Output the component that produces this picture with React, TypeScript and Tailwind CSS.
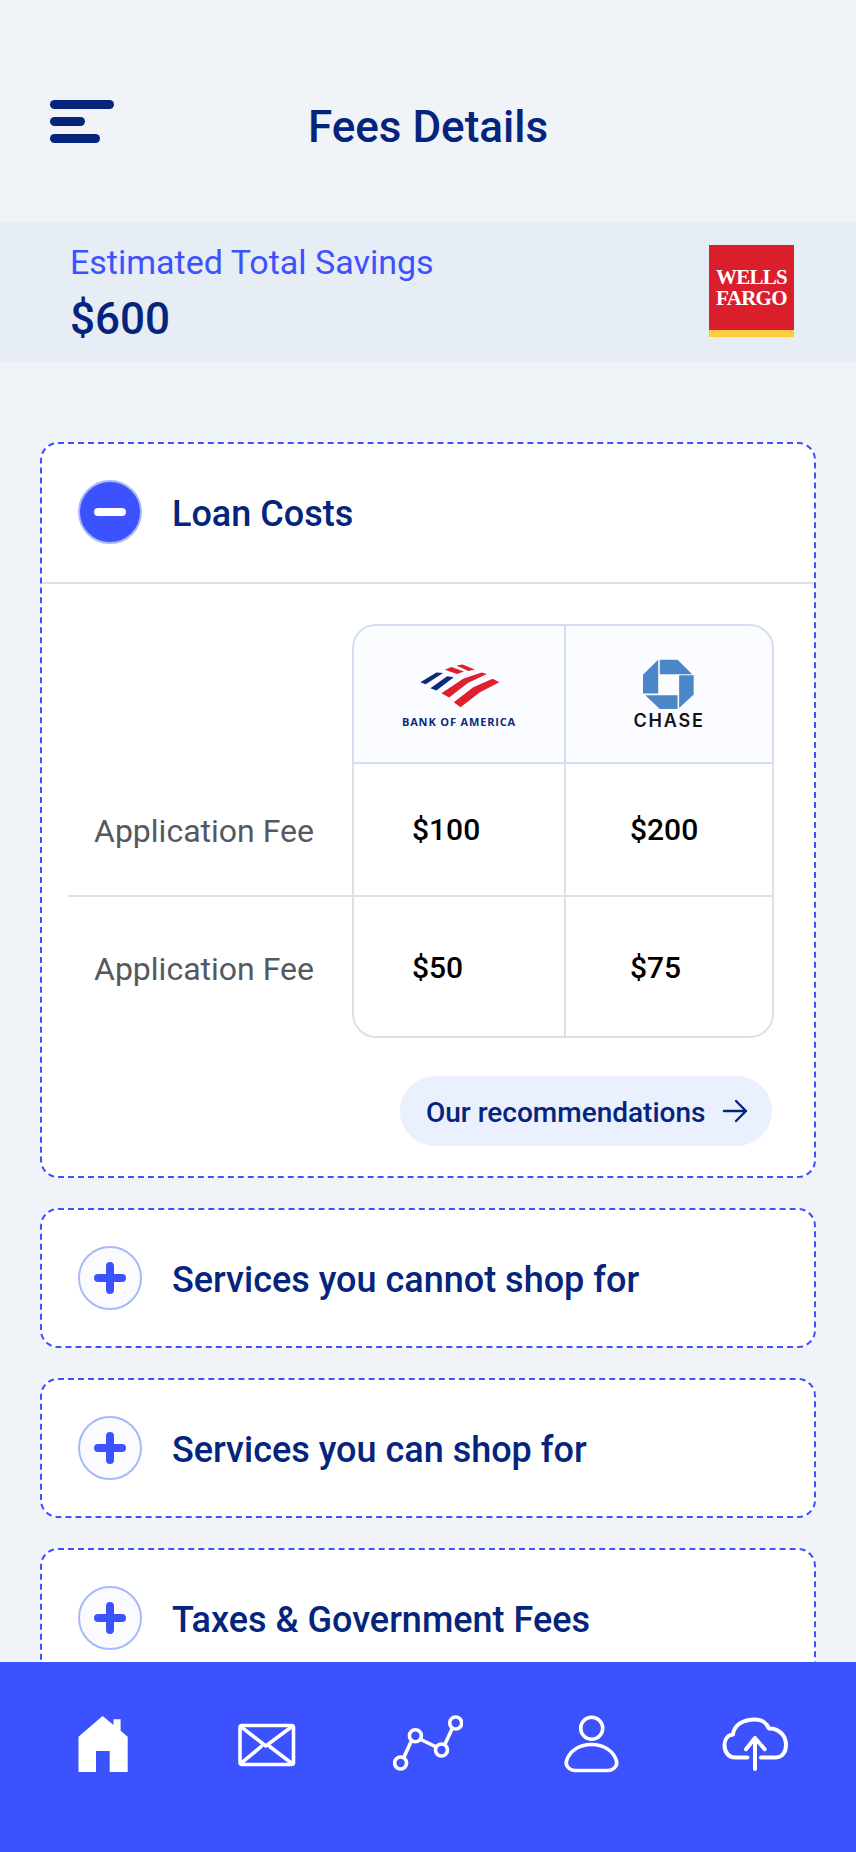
import React from "react";

const NAVY = "text-[#05247c]";

function Plus() {
  return (
    <div className="w-16 h-16 shrink-0 rounded-full border-2 border-[#a6baf9] bg-[#fafbff] flex items-center justify-center">
      <svg width="32" height="32" viewBox="0 0 32 32">
        <path d="M4 16H28M16 4V28" stroke="#3d52ff" strokeWidth="8" strokeLinecap="round" />
      </svg>
    </div>
  );
}

function Minus() {
  return (
    <div className="w-16 h-16 shrink-0 rounded-full border-2 border-[#a6baf9] bg-[#3d52ff] flex items-center justify-center">
      <div className="w-8 h-2 rounded-full bg-white" />
    </div>
  );
}

function CollapsedCard({ title }: { title: string }) {
  return (
    <section className="h-[140px] shrink-0 rounded-[18px] border-2 border-dashed border-[#3d52ff] bg-white flex items-center pl-9 gap-[30px]">
      <Plus />
      <h2 className={`pt-[4px] text-[36px] leading-none font-medium ${NAVY}`}>{title}</h2>
    </section>
  );
}

function BofaLogo() {
  return (
    <div className="flex flex-col items-center">
      <svg width="82" height="47" viewBox="235 150 245 140">
        <g fill="#0a2a7c">
          <path d="M242 210L290 181L310 183L258 216Z" />
          <path d="M272 228L322 192L342 195L290 235Z" />
        </g>
        <g fill="#df1f2d">
          <path d="M315 173L335 165L372 178L352 186Z" />
          <path d="M350 160L368 157L405 172L385 177Z" />
          <path d="M305 243L370 200L425 181L441 186L385 212L328 256Z" />
          <path d="M342 270L400 225L458 200L478 210L420 240L362 285Z" />
        </g>
      </svg>
      <div className="mt-[7px] text-[11px] leading-[11px] font-bold tracking-[0.85px] whitespace-nowrap text-[#0a2a7c] font-['Open_Sans',sans-serif]">
        BANK OF AMERICA
      </div>
    </div>
  );
}

function ChaseLogo() {
  return (
    <div className="flex flex-col items-center">
      <svg width="51" height="51" viewBox="908 150 158 154" className="-mt-[1px]">
        <g fill="#4a86c8">
          <path d="M960 150H1015L1060 195H960Z" />
          <path d="M1020 198H1065V258L1020 300Z" />
          <path d="M915 260H1015V303H960Z" />
          <path d="M908 197L955 150V255H908Z" />
        </g>
      </svg>
      <div className="mt-[3px] text-[18px] leading-[15px] font-semibold tracking-[1.8px] text-[#111318] font-['Inter',sans-serif]">
        CHASE
      </div>
    </div>
  );
}

function LoanCard() {
  const hd = "border-[#d4ddf3] bg-[#fbfcff] flex items-center justify-center";
  const label = "text-[32px] leading-none text-[#55585f] pl-[26px] pt-[3px] flex items-center";
  const val = "text-[30px] leading-none font-medium text-black flex items-center";
  return (
    <section className="h-[736px] shrink-0 rounded-[18px] border-2 border-dashed border-[#3d52ff] bg-white flex flex-col">
      <div className="h-[140px] shrink-0 border-b-2 border-[#e0e0e0] flex items-center pl-9 pb-[2px] gap-[30px]">
        <Minus />
        <h2 className={`pt-[4px] text-[36px] leading-none font-medium ${NAVY}`}>Loan Costs</h2>
      </div>
      <div className="grid grid-cols-[284px_214px_208px] grid-rows-[140px_133px_141px] ml-[26px] mt-10">
        <div />
        <div className={`${hd} border-t-2 border-l-2 border-r-2 border-b-2 rounded-tl-[24px]`}>
          <BofaLogo />
        </div>
        <div className={`${hd} border-t-2 border-r-2 border-b-2 rounded-tr-[24px]`}>
          <ChaseLogo />
        </div>

        <div className={`${label} border-b-2 border-[#e0e0e0]`}>Application Fee</div>
        <div className={`${val} pl-[58px] border-l-2 border-r-2 border-b-2 border-[#e0e0e0]`}>$100</div>
        <div className={`${val} pl-[64px] border-r-2 border-b-2 border-[#e0e0e0]`}>$200</div>

        <div className={label}>Application Fee</div>
        <div className={`${val} pl-[58px] pt-[2px] border-l-2 border-r-2 border-b-2 border-[#e0e0e0] rounded-bl-[24px]`}>$50</div>
        <div className={`${val} pl-[64px] pt-[2px] border-r-2 border-b-2 border-[#e0e0e0] rounded-br-[24px]`}>$75</div>
      </div>
      <div className="flex justify-end pr-[42px] mt-[38px]">
        <button className={`w-[372px] h-[70px] rounded-full bg-[#eaf0fd] flex items-center pl-[26px] gap-[17px] ${NAVY}`}>
          <span className="pt-[4px] text-[28px] leading-none font-medium whitespace-nowrap">Our recommendations</span>
          <svg width="26" height="24" viewBox="0 0 26 24" fill="none" stroke="#05247c" strokeWidth="2.4" strokeLinecap="round" strokeLinejoin="round">
            <path d="M2 12H24M14 2L24 12L14 22" />
          </svg>
        </button>
      </div>
    </section>
  );
}

function NavIcons() {
  const common = { width: 70, height: 60, viewBox: "0 0 70 60", fill: "none", stroke: "white", strokeWidth: 3.6, strokeLinecap: "round" as const, strokeLinejoin: "round" as const };
  return (
    <>
      <svg width="70" height="60" viewBox="0 0 70 60" fill="white">
        <path d="M11.5 22.7L35.6 2L46.5 11V5.3H53.6V16.7L60.7 22.7V58H42.7V37H29V58H11.5Z" />
      </svg>
      <svg {...common} className="ml-[5px]">
        <rect x="8" y="11.5" width="53.5" height="39" rx="2" />
        <path d="M9.8 13.3L33.8 32L59 13.3M9.8 48.7L29 32.7M59 48.7L38 32.7" />
      </svg>
      <svg {...common}>
        <circle cx="7.6" cy="49" r="6" />
        <circle cx="22.4" cy="21.7" r="6" />
        <circle cx="48.5" cy="36" r="6" />
        <circle cx="62.7" cy="9" r="6" />
        <path d="M11.5 42L18 27.7M28.9 26L42.5 32.7M52.4 29.3L58.9 15.3" />
      </svg>
      <svg {...common}>
        <circle cx="35.7" cy="14.3" r="11" />
        <path d="M19 56.5H52C57 56.5 62 52 60.5 47C58 38 49 30.5 35.5 30.5C22 30.5 13 38 10.5 47C9 52 14 56.5 19 56.5Z" />
      </svg>
      <svg {...common} strokeWidth={4}>
        <path d="M28.5 43.5H16C9.5 43.5 5.5 38 5.5 31C5.5 25 9 21 14 20.5C15 11 24 5.5 36 5.5C43 5.5 48 9.5 50 14.5C59 14 67 21 67 31C67 38 63 43.5 57 43.5H42" />
        <path d="M36 55V24M27 35.3L36 24L45.7 35.3" />
      </svg>
    </>
  );
}

export default function App() {
  return (
    <div className="w-[856px] h-[1852px] flex flex-col overflow-hidden bg-[#f0f3f8] font-['Roboto',sans-serif]">
      <main className="flex-1 min-h-0 overflow-hidden flex flex-col">
        <header className="h-[222px] shrink-0 pt-[100px] grid grid-cols-[1fr_auto_1fr] items-start">
          <div className="pl-[50px] flex flex-col gap-2">
            <div className="w-16 h-[9px] rounded-full bg-[#05247c]" />
            <div className="w-[35px] h-[9px] rounded-full bg-[#05247c]" />
            <div className="w-[50px] h-[9px] rounded-full bg-[#05247c]" />
          </div>
          <h1 className={`mt-[1px] text-[44px] leading-[52px] font-medium ${NAVY}`}>Fees Details</h1>
          <div />
        </header>

        <div className="h-[140px] shrink-0 bg-[#e6edf5] flex items-start justify-between pl-[70px] pr-[62px]">
          <div className="pt-[21px]">
            <div className="text-[34px] leading-[38px] text-[#3d52ff]">Estimated Total Savings</div>
            <div className={`mt-[12px] text-[44px] leading-[52px] font-medium ${NAVY}`}>$600</div>
          </div>
          <div className="mt-[23px] w-[85px] h-[92px] bg-[#da1e2c] border-b-[7px] border-[#ffcb3f] flex flex-col items-center justify-center text-white font-['Liberation_Serif',serif] font-bold text-[21px] tracking-[-0.7px] leading-[21px]">
            <span>WELLS</span>
            <span>FARGO</span>
          </div>
        </div>

        <div className="mt-20 mx-10 flex flex-col gap-[30px]">
          <LoanCard />
          <CollapsedCard title="Services you cannot shop for" />
          <CollapsedCard title="Services you can shop for" />
          <CollapsedCard title="Taxes & Government Fees" />
        </div>
      </main>

      <nav className="h-[190px] shrink-0 bg-[#3d52ff] grid grid-cols-[repeat(5,163px)] justify-items-center items-start pl-5 pt-[52px]">
        <NavIcons />
      </nav>
    </div>
  );
}
